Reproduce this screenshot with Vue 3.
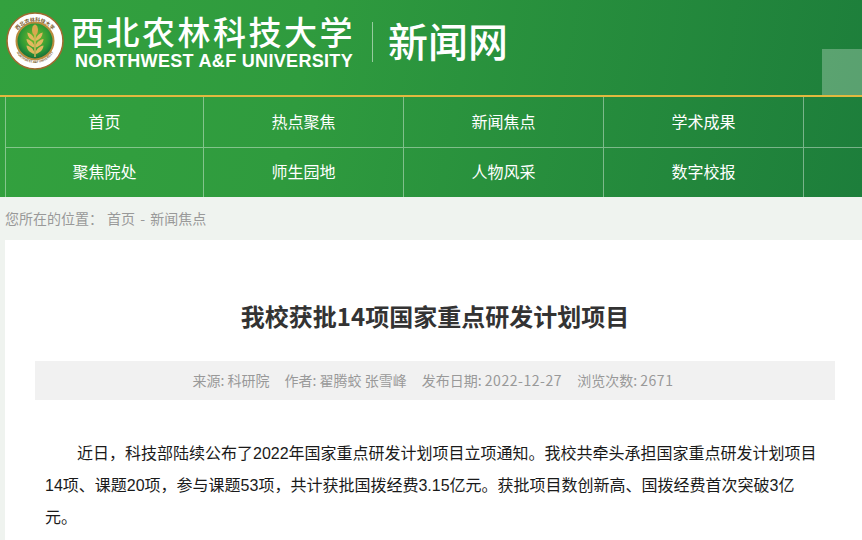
<template>
  <div class="page">
    <div class="top">
      <header class="header">
        <svg class="logo" viewBox="0 0 58 58" width="58" height="58">
          <defs>
            <radialGradient id="seal" cx="50%" cy="42%" r="58%">
              <stop offset="0%" stop-color="#7dbb2a" />
              <stop offset="65%" stop-color="#2f9a35" />
              <stop offset="100%" stop-color="#12683a" />
            </radialGradient>
            <path id="arcTop" d="M7.5 31a21.5 21.5 0 0 1 43 0" />
            <path id="arcBottom" d="M8.5 36a21.5 21.5 0 0 0 41 0" />
          </defs>
          <circle cx="29" cy="29" r="28" fill="#fff" stroke="#a06a30" stroke-width="1.6" />
          <circle cx="29" cy="29" r="18.5" fill="url(#seal)" stroke="#b98c3e" stroke-width="2" />
          <text class="seal-cn"><textPath href="#arcTop" startOffset="50%" text-anchor="middle">西北农林科技大学</textPath></text>
          <text class="seal-en"><textPath href="#arcBottom" startOffset="50%" text-anchor="middle">NORTHWEST A&amp;F UNIVERSITY</textPath></text>
          <g fill="#e3b85f">
            <ellipse cx="29" cy="18" rx="3" ry="5.4" fill="#d9a94e" />
            <path d="M28.300 27c-1-3.600-4-6-7-6.600.2 4 2.600 6.800 7 8.600zM29.700 27c1-3.600 4-6 7-6.600-.2 4-2.600 6.800-7 8.600z" />
            <path d="M28.300 33.500c-1-3.600-4.400-6-7.800-6.600.2 4 3 6.800 7.800 8.600zM29.700 33.500c1-3.600 4.400-6 7.800-6.600-.2 4-3 6.800-7.800 8.600z" />
            <path d="M28.300 40c-1-3.600-4.400-6-7.800-6.600.2 4 3 6.800 7.800 8.600zM29.700 40c1-3.600 4.400-6 7.800-6.600-.2 4-3 6.800-7.800 8.600z" />
            <rect x="28.300" y="23" width="1.400" height="22" />
          </g>
        </svg>
        <div class="school">
          <div class="school-cn">西北农林科技大学</div>
          <div class="school-en">NORTHWEST A&amp;F UNIVERSITY</div>
        </div>
        <div class="site-name">新闻网</div>
        <div class="corner"></div>
      </header>
      <nav class="nav">
        <a v-for="item in navItems" :key="item.id" class="nav-item">{{ item.label }}</a>
      </nav>
    </div>
    <div class="crumb">
      <span>您所在的位置：</span>
      <span class="crumb-path">首页 - 新闻焦点</span>
    </div>
    <main class="article">
      <h1 class="title">我校获批14项国家重点研发计划项目</h1>
      <div class="meta">
        <span>来源: 科研院</span>
        <span>作者: 翟腾蛟 张雪峰</span>
        <span>发布日期: <span class="num">2022-12-27</span></span>
        <span>浏览次数: <span class="num">2671</span></span>
      </div>
      <p class="text">近日，科技部陆续公布了2022年国家重点研发计划项目立项通知。我校共牵头承担国家重点研发计划项目14项、课题20项，参与课题53项，共计获批国拨经费3.15亿元。获批项目数创新高、国拨经费首次突破3亿元。</p>
    </main>
  </div>
</template>

<script setup>
const labels = [
  '首页', '热点聚焦', '新闻焦点', '学术成果', '',
  '聚焦院处', '师生园地', '人物风采', '数字校报', ''
]
const navItems = labels.map((label, id) => ({ id, label }))
</script>

<style>
html,
body {
  background: #eff3ef;
  overflow: hidden;
}
</style>

<style scoped>
.page {
  width: 862px;
  height: 540px;
  overflow: hidden;
  font-family: "Noto Sans CJK SC", "Liberation Sans", sans-serif;
}

.top {
  background: linear-gradient(100deg, #33a13e 0%, #2f9b3e 35%, #1d7e3b 100%);
}

.header {
  height: 95px;
  display: flex;
  align-items: flex-start;
  padding-left: 6px;
  position: relative;
  border-bottom: 2px solid #e2b93f;
}

.logo {
  margin-top: 12px;
  flex: none;
}

.seal-cn {
  font-size: 5px;
  font-weight: 700;
  fill: #7a5a2a;
}

.seal-en {
  font-size: 3px;
  font-weight: 700;
  fill: #7a5a2a;
}

.school {
  margin-left: 7px;
  width: 283px;
  color: #fff;
}

.school-cn {
  margin-top: 11px;
  font-size: 33px;
  line-height: 40px;
  letter-spacing: 2.5px;
  white-space: nowrap;
  font-weight: 500;
}

.school-en {
  margin-top: 1px;
  margin-left: 4px;
  font-family: "Liberation Sans", sans-serif;
  font-weight: 700;
  font-size: 18px;
  line-height: 18px;
  letter-spacing: 0.32px;
  white-space: nowrap;
}

.site-name {
  margin: 22px 0 0 18px;
  padding-left: 15px;
  height: 40px;
  border-left: 1px solid rgba(255, 255, 255, 0.5);
  color: #fff;
  font-size: 40px;
  line-height: 37px;
  font-weight: 500;
}

.corner {
  position: absolute;
  right: 0;
  bottom: 0;
  width: 40px;
  height: 46px;
  background: rgba(255, 255, 255, 0.27);
}

.nav {
  display: grid;
  grid-template-columns: 198px 200px 200px 200px 59px;
  grid-template-rows: 51px 49px;
  padding-left: 5px;
}

.nav-item {
  display: flex;
  align-items: center;
  justify-content: center;
  padding-bottom: 3px;
  border-left: 1px solid rgba(255, 255, 255, 0.4);
  color: #fff;
  font-size: 16px;
}

.nav-item:nth-child(-n + 5) {
  border-bottom: 1px solid rgba(255, 255, 255, 0.4);
}

.crumb {
  height: 43px;
  display: flex;
  align-items: center;
  gap: 4px;
  padding: 0 0 2px 5px;
  box-sizing: border-box;
  background: #eff3ef;
  color: #999;
  font-size: 14px;
}

.crumb-path {
  word-spacing: 2px;
}

.article {
  margin-left: 5px;
  padding: 0 27px 0 30px;
  background: #fff;
  height: 300px;
}

.title {
  margin: 0;
  padding-top: 59px;
  height: 121px;
  box-sizing: border-box;
  text-align: center;
  font-size: 24px;
  line-height: 34px;
  font-weight: 700;
  color: #333;
}

.meta {
  height: 39px;
  display: flex;
  align-items: center;
  justify-content: center;
  gap: 15px;
  padding: 0 4px 2px 0;
  box-sizing: border-box;
  background: #f1f1f1;
  color: #999;
  font-size: 14px;
}

.num {
  letter-spacing: 0.55px;
}

.text {
  margin: 38px 0 0;
  padding: 0 15px 0 10px;
  font-family: "Liberation Sans", "Noto Sans CJK SC", sans-serif;
  color: #1a1a1a;
  font-size: 16px;
  line-height: 32px;
  text-indent: 2em;
}
</style>
